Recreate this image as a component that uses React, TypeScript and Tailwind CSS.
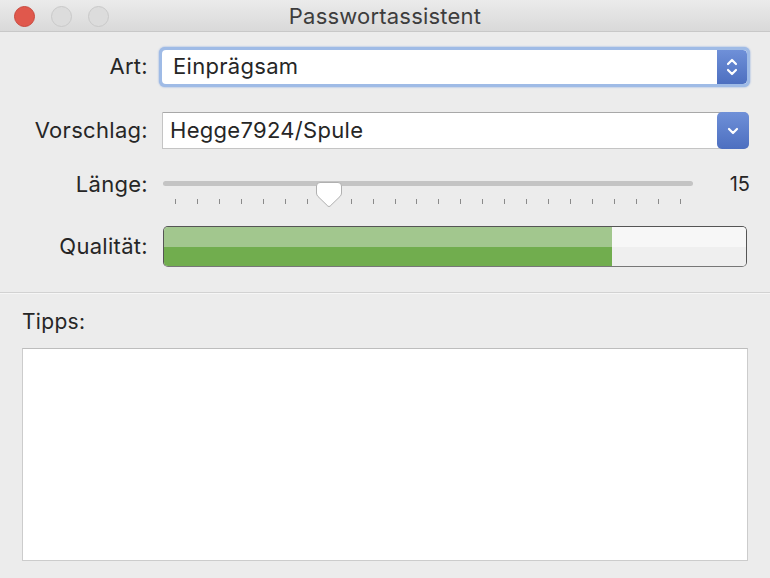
import React from 'react';

const font = { fontFamily: 'Inter, "Liberation Sans", sans-serif' };

function TrafficLights() {
  return (
    <div className="flex items-center gap-[16px] pl-[14px]">
      <span className="w-[21px] h-[21px] rounded-full bg-[#e0584c] border border-[#c8483d]" />
      <span className="w-[21px] h-[21px] rounded-full bg-[#dcdcdc] border border-[#c9c9c9]" />
      <span className="w-[21px] h-[21px] rounded-full bg-[#dcdcdc] border border-[#c9c9c9]" />
    </div>
  );
}

function UpDown() {
  return (
    <svg width="14" height="22" viewBox="0 0 14 22" fill="none" stroke="white" strokeWidth="2.2" strokeLinecap="round" strokeLinejoin="round">
      <path d="M3 8 L7 4 L11 8" />
      <path d="M3 14 L7 18 L11 14" />
    </svg>
  );
}

function Down() {
  return (
    <svg width="14" height="10" viewBox="0 0 14 10" fill="none" stroke="white" strokeWidth="2.2" strokeLinecap="round" strokeLinejoin="round">
      <path d="M3 3 L7 7 L11 3" />
    </svg>
  );
}

function Label({ children }: { children: React.ReactNode }) {
  return <div className="w-[148px] shrink-0 text-right text-[22px] tracking-[0.3px] text-[#262626]">{children}</div>;
}

const MIN = 8;
const MAX = 31;
const VALUE = 15;

function Slider() {
  const ticks = Array.from({ length: MAX - MIN + 1 });
  const pct = (VALUE - MIN) / (MAX - MIN);
  return (
    <div className="relative w-[530px] h-[30px]">
      <div className="mt-[6px] h-[5px] rounded-full bg-[#c4c4c4]" />
      <div className="mt-[13px] flex justify-between px-[12px]">
        {ticks.map((_, i) => (
          <span key={i} className="w-[1px] h-[5px] bg-[#8a8a8a]" />
        ))}
      </div>
      <div className="absolute top-0" style={{ left: 12 + pct * 507 - 14 }}>
        <svg width="28" height="28" viewBox="0 0 28 28">
          <path d="M5 1.5 H23 Q26.5 1.5 26.5 5 V12 Q26.5 14 25 15.5 L15.2 25 Q14 26.2 12.8 25 L3 15.5 Q1.5 14 1.5 12 V5 Q1.5 1.5 5 1.5 Z" fill="white" stroke="#b0b0b0" strokeWidth="1" />
        </svg>
      </div>
    </div>
  );
}

export default function App() {
  return (
    <div className="w-[770px] h-[578px] bg-[#ececec] flex flex-col overflow-hidden" style={font}>
      {/* Title bar */}
      <div className="h-[32px] shrink-0 grid grid-cols-[1fr_auto_1fr] items-center bg-gradient-to-b from-[#ebebeb] to-[#d9d9d9] border-b border-[#c8c8c8]">
        <TrafficLights />
        <div className="text-[22px] tracking-[0.2px] text-[#3d3d3d]">Passwortassistent</div>
        <div />
      </div>

      {/* Form */}
      <div className="flex flex-col">
        <div className="mt-[17px] flex items-center h-[35px]">
          <Label>Art:</Label>
          <div className="ml-[11px] w-[591px] h-[40px] rounded-[6px] p-[3px] bg-[#9fbbe6] shadow-[0_0_2px_#7c9fdc]">
            <div className="h-full flex rounded-[4px] bg-white overflow-hidden">
              <div className="flex-1 flex items-center pl-[11px] text-[22px] tracking-[0.3px] text-[#262626]">Einprägsam</div>
              <div className="w-[30px] flex items-center justify-center bg-gradient-to-b from-[#6f90d8] to-[#4d6fc0] rounded-r-[4px]">
                <UpDown />
              </div>
            </div>
          </div>
        </div>

        <div className="mt-[28px] flex items-center h-[37px]">
          <Label>Vorschlag:</Label>
          <div className="ml-[14px] w-[587px] h-[37px] flex bg-white border border-[#c4c4c4] border-t-[#a8a8a8] rounded-r-[6px]">
            <div className="flex-1 flex items-center pl-[7px] text-[22px] tracking-[0.3px] text-[#262626]">Hegge7924/Spule</div>
            <div className="w-[32px] -my-[1px] -mr-[1px] flex items-center justify-center bg-gradient-to-b from-[#6f90d8] to-[#4d6fc0] rounded-[5px]">
              <Down />
            </div>
          </div>
        </div>

        <div className="mt-[26px] flex items-start h-[30px]">
          <div className="-mt-[7px]">
            <Label>Länge:</Label>
          </div>
          <div className="ml-[15px]">
            <Slider />
          </div>
          <div className="flex-1 pr-[20px] -mt-[6px] text-right text-[20px] text-[#262626]">15</div>
        </div>

        <div className="mt-[21px] flex items-center h-[41px]">
          <Label>Qualität:</Label>
          <div className="ml-[15px] w-[584px] h-[41px] rounded-[5px] border border-[#555555] border-b-[#777777] overflow-hidden flex">
            <div className="w-[448px] flex flex-col">
              <div className="flex-1 bg-[#a2c78e]" />
              <div className="flex-1 bg-[#71ad4e]" />
            </div>
            <div className="flex-1 flex flex-col">
              <div className="flex-1 bg-[#f7f7f7]" />
              <div className="flex-1 bg-[#efefef]" />
            </div>
          </div>
        </div>
      </div>

      {/* Divider */}
      <div className="mt-[25px] h-[2px] border-t border-[#d2d2d2] border-b border-b-[#f6f6f6]" />

      {/* Tips */}
      <div className="flex-1 flex flex-col px-[22px] pb-[17px]">
        <div className="mt-[16px] text-[21px] tracking-[0.3px] text-[#262626] leading-[24px]">Tipps:</div>
        <div className="mt-[14px] flex-1 bg-white border border-[#cccccc] border-t-[#bdbdbd]" />
      </div>
    </div>
  );
}
